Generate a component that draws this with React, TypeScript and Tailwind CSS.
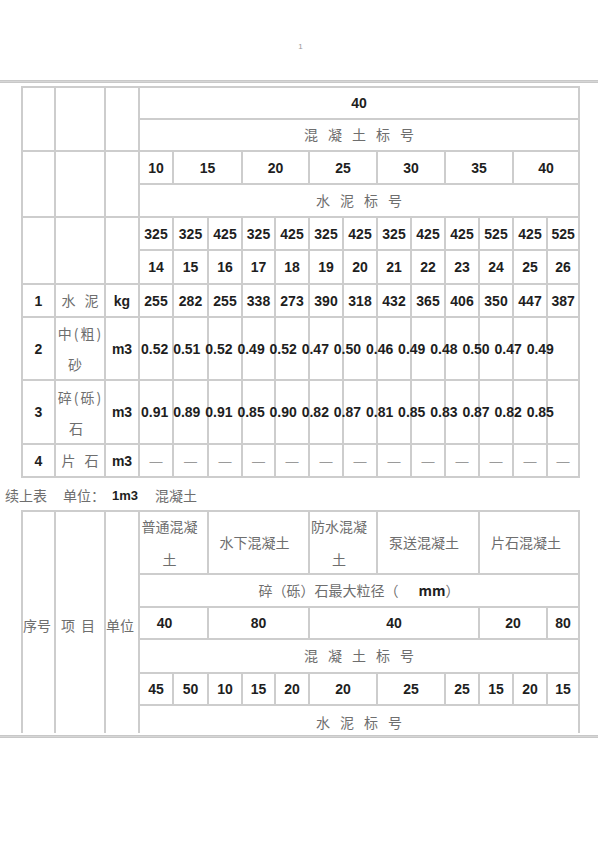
import React from "react";

const B = "border-2 border-[#cdcdcd] p-0 text-center align-middle";
const N = "font-bold text-[14px] text-[#1e1e1e] leading-none";
const C = "text-[14px] text-[#6e6e6e] font-normal leading-none font-['Noto_Sans_CJK_SC',sans-serif]";

const widths = [33, 50, 34, 34, 35, 34, 33, 34, 34, 34, 34, 34, 34, 34, 34, 32];

function Cols() {
  return (
    <colgroup>
      {widths.map((w, i) => (
        <col key={i} style={{ width: w }} />
      ))}
    </colgroup>
  );
}

function Spaced({ text, gap }: { text: string; gap: "g6" | "g9" | "g10" }) {
  const cls =
    gap === "g6"
      ? "inline-flex gap-[6px]"
      : gap === "g9"
      ? "inline-flex gap-[9px]"
      : "inline-flex gap-[10px]";
  return (
    <span className={cls + " " + C}>
      {text.split("").map((c, i) => (
        <span key={i}>{c}</span>
      ))}
    </span>
  );
}

const r325 = ["325", "325", "425", "325", "425", "325", "425", "325", "425", "425", "525", "425", "525"];
const rIdx = ["14", "15", "16", "17", "18", "19", "20", "21", "22", "23", "24", "25", "26"];
const rCem = ["255", "282", "255", "338", "273", "390", "318", "432", "365", "406", "350", "447", "387"];
const rSand = "0.52 0.51 0.52 0.49 0.52 0.47 0.50 0.46 0.49 0.48 0.50 0.47 0.49";
const rStone = "0.91 0.89 0.91 0.85 0.90 0.82 0.87 0.81 0.85 0.83 0.87 0.82 0.85";

function Table1() {
  return (
    <table className="border-collapse table-fixed w-[557px] ml-[21px]">
      <Cols />
      <tbody>
        <tr className="h-[32px]">
          <td rowSpan={2} className={B} />
          <td rowSpan={2} className={B} />
          <td rowSpan={2} className={B} />
          <td colSpan={13} className={B}>
            <span className={N}>40</span>
          </td>
        </tr>
        <tr className="h-[32px]">
          <td colSpan={13} className={B}>
            <Spaced text="混凝土标号" gap="g10" />
          </td>
        </tr>
        <tr className="h-[33px]">
          <td rowSpan={2} className={B} />
          <td rowSpan={2} className={B} />
          <td rowSpan={2} className={B} />
          <td className={B}><span className={N}>10</span></td>
          <td colSpan={2} className={B}><span className={N}>15</span></td>
          <td colSpan={2} className={B}><span className={N}>20</span></td>
          <td colSpan={2} className={B}><span className={N}>25</span></td>
          <td colSpan={2} className={B}><span className={N}>30</span></td>
          <td colSpan={2} className={B}><span className={N}>35</span></td>
          <td colSpan={2} className={B}><span className={N}>40</span></td>
        </tr>
        <tr className="h-[33px]">
          <td colSpan={13} className={B}>
            <Spaced text="水泥标号" gap="g10" />
          </td>
        </tr>
        <tr className="h-[33px]">
          <td rowSpan={2} className={B} />
          <td rowSpan={2} className={B} />
          <td rowSpan={2} className={B} />
          {r325.map((v, i) => (
            <td key={i} className={B}><span className={N}>{v}</span></td>
          ))}
        </tr>
        <tr className="h-[34px]">
          {rIdx.map((v, i) => (
            <td key={i} className={B}><span className={N}>{v}</span></td>
          ))}
        </tr>
        <tr className="h-[33px]">
          <td className={B}><span className={N}>1</span></td>
          <td className={B}><Spaced text="水泥" gap="g9" /></td>
          <td className={B}><span className={N}>kg</span></td>
          {rCem.map((v, i) => (
            <td key={i} className={B}><span className={N}>{v}</span></td>
          ))}
        </tr>
        <tr className="h-[63px]">
          <td className={B}><span className={N}>2</span></td>
          <td className={B}>
            <div className="flex flex-col items-center gap-[17px]">
              <span className={C + " tracking-[2px] pl-[1px]"}>中(粗)</span>
              <span className={C + " pr-[10px]"}>砂</span>
            </div>
          </td>
          <td className={B}><span className={N}>m3</span></td>
          <td className={B + " text-left whitespace-nowrap pl-[1px]"}>
            <span className={N + " [word-spacing:1px]"}>{rSand}</span>
          </td>
          {Array.from({ length: 12 }).map((_, i) => (
            <td key={i} className={B} />
          ))}
        </tr>
        <tr className="h-[64px]">
          <td className={B}><span className={N}>3</span></td>
          <td className={B}>
            <div className="flex flex-col items-center gap-[17px]">
              <span className={C + " tracking-[2px] pl-[1px]"}>碎(砾)</span>
              <span className={C + " pr-[8px]"}>石</span>
            </div>
          </td>
          <td className={B}><span className={N}>m3</span></td>
          <td className={B + " text-left whitespace-nowrap pl-[1px]"}>
            <span className={N + " [word-spacing:1px]"}>{rStone}</span>
          </td>
          {Array.from({ length: 12 }).map((_, i) => (
            <td key={i} className={B} />
          ))}
        </tr>
        <tr className="h-[33px]">
          <td className={B}><span className={N}>4</span></td>
          <td className={B}><Spaced text="片石" gap="g9" /></td>
          <td className={B}><span className={N}>m3</span></td>
          {Array.from({ length: 13 }).map((_, i) => (
            <td key={i} className={B}>
              <span className="text-[13px] text-[#9a9a9a] leading-none">—</span>
            </td>
          ))}
        </tr>
      </tbody>
    </table>
  );
}

function Table2() {
  return (
    <div className="h-[223px] overflow-hidden">
      <table className="border-collapse table-fixed w-[557px] ml-[21px]">
        <Cols />
        <tbody>
          <tr className="h-[63px]">
            <td rowSpan={6} className={B + " text-left"}>
              <span className={C}>序号</span>
            </td>
            <td rowSpan={6} className={B + " text-left pl-[5px]"}>
              <Spaced text="项目" gap="g6" />
            </td>
            <td rowSpan={6} className={B + " text-left"}>
              <span className={C}>单位</span>
            </td>
            <td colSpan={2} className={B}>
              <div className="flex flex-col items-center gap-[19px] pr-[8px]">
                <span className={C}>普通混凝</span>
                <span className={C}>土</span>
              </div>
            </td>
            <td colSpan={3} className={B}>
              <span className={C + " pr-[8px]"}>水下混凝土</span>
            </td>
            <td colSpan={2} className={B}>
              <div className="flex flex-col items-center gap-[19px] pr-[8px]">
                <span className={C}>防水混凝</span>
                <span className={C}>土</span>
              </div>
            </td>
            <td colSpan={3} className={B}>
              <span className={C + " pr-[8px]"}>泵送混凝土</span>
            </td>
            <td colSpan={3} className={B}>
              <span className={C + " pr-[6px]"}>片石混凝土</span>
            </td>
          </tr>
          <tr className="h-[33px]">
            <td colSpan={13} className={B}>
              <span className={C}>
                碎（砾）石最大粒径（
                <span className="inline-block w-[20px]" />
                <span className={N}>mm</span>）
              </span>
            </td>
          </tr>
          <tr className="h-[32px]">
            <td colSpan={2} className={B + " pr-[18px]"}><span className={N}>40</span></td>
            <td colSpan={3} className={B}><span className={N}>80</span></td>
            <td colSpan={5} className={B}><span className={N}>40</span></td>
            <td colSpan={2} className={B}><span className={N}>20</span></td>
            <td className={B}><span className={N}>80</span></td>
          </tr>
          <tr className="h-[34px]">
            <td colSpan={13} className={B}>
              <Spaced text="混凝土标号" gap="g10" />
            </td>
          </tr>
          <tr className="h-[32px]">
            {["45", "50", "10", "15", "20"].map((v, i) => (
              <td key={i} className={B}><span className={N}>{v}</span></td>
            ))}
            <td colSpan={2} className={B}><span className={N}>20</span></td>
            <td colSpan={2} className={B}><span className={N}>25</span></td>
            <td className={B}><span className={N}>25</span></td>
            <td className={B}><span className={N}>15</span></td>
            <td className={B}><span className={N}>20</span></td>
            <td className={B}><span className={N}>15</span></td>
          </tr>
          <tr className="h-[36px]">
            <td colSpan={13} className={B}>
              <Spaced text="水泥标号" gap="g10" />
            </td>
          </tr>
        </tbody>
      </table>
    </div>
  );
}

export default function App() {
  return (
    <div className="w-[600px] h-[849px] bg-white overflow-hidden font-['Liberation_Sans','Noto_Sans_CJK_SC',sans-serif]">
      <div className="pt-[42px] h-[52px] flex justify-center">
        <span className="text-[8px] leading-[10px] text-[#9a9a9a] pl-[1px]">1</span>
      </div>
      <div className="mt-[28px] w-[598px] h-[3px] bg-[#d6d6d6] border-y border-[#c8c8c8]" />
      <div className="mt-[3px]">
        <Table1 />
      </div>
      <div className="mt-[10px] flex items-center h-[14px] pl-[5px]">
        <span className={C}>续上表</span>
        <span className={C + " ml-[16px]"}>单位：</span>
        <span className="font-bold text-[13px] text-[#1e1e1e] leading-none ml-[7px]">1m3</span>
        <span className={C + " ml-[17px]"}>混凝土</span>
      </div>
      <div className="mt-[8px]">
        <Table2 />
      </div>
      <div className="mt-[2px] w-[598px] h-[3px] bg-[#d6d6d6] border-y border-[#c8c8c8]" />
    </div>
  );
}
